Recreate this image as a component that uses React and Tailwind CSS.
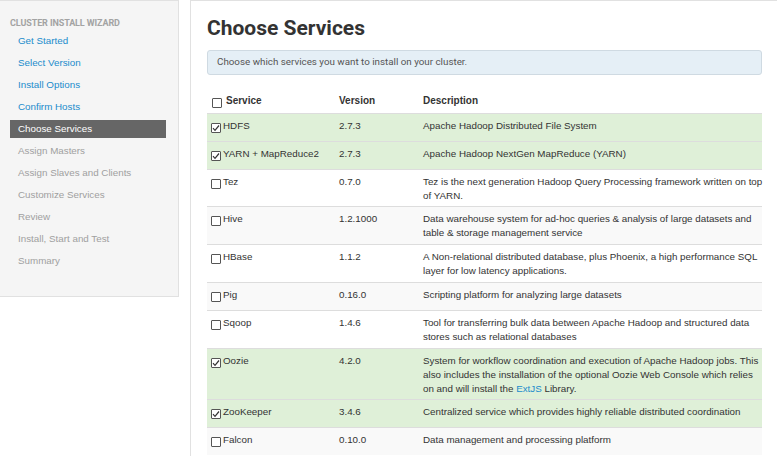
import React from "react";

const Check = ({ checked, className = "" }) => (
  <span className={`inline-flex w-[10px] h-[10px] shrink-0 border border-[#555] rounded-[1px] bg-white items-center justify-center ${className}`}>
    {checked && (
      <svg width="8" height="8" viewBox="0 0 8 8">
        <polyline points="1,4.2 3,6.3 7,1.5" fill="none" stroke="#333" strokeWidth="1.2" />
      </svg>
    )}
  </span>
);

const steps = [
  ["Get Started", "link"],
  ["Select Version", "link"],
  ["Install Options", "link"],
  ["Confirm Hosts", "link"],
  ["Choose Services", "active"],
  ["Assign Masters", "off"],
  ["Assign Slaves and Clients", "off"],
  ["Customize Services", "off"],
  ["Review", "off"],
  ["Install, Start and Test", "off"],
  ["Summary", "off"],
];

const rows = [
  { name: "HDFS", v: "2.7.3", d: ["Apache Hadoop Distributed File System"], c: true },
  { name: "YARN + MapReduce2", v: "2.7.3", d: ["Apache Hadoop NextGen MapReduce (YARN)"], c: true },
  { name: "Tez", v: "0.7.0", d: ["Tez is the next generation Hadoop Query Processing framework written on top", "of YARN."] },
  { name: "Hive", v: "1.2.1000", d: ["Data warehouse system for ad-hoc queries & analysis of large datasets and", "table & storage management service"], tall: true },
  { name: "HBase", v: "1.1.2", d: ["A Non-relational distributed database, plus Phoenix, a high performance SQL", "layer for low latency applications."], tall: true },
  { name: "Pig", v: "0.16.0", d: ["Scripting platform for analyzing large datasets"] },
  { name: "Sqoop", v: "1.4.6", d: ["Tool for transferring bulk data between Apache Hadoop and structured data", "stores such as relational databases"], tall: true },
  {
    name: "Oozie",
    v: "4.2.0",
    d: [
      "System for workflow coordination and execution of Apache Hadoop jobs. This",
      "also includes the installation of the optional Oozie Web Console which relies",
      <>on and will install the <span className="text-[#1b8ccc]">ExtJS</span> Library.</>,
    ],
    c: true,
  },
  { name: "ZooKeeper", v: "3.4.6", d: ["Centralized service which provides highly reliable distributed coordination"], c: true },
  { name: "Falcon", v: "0.10.0", d: ["Data management and processing platform"] },
];

export default function App() {
  return (
    <div className="flex w-[777px] h-[456px] overflow-hidden bg-white font-['Liberation_Sans',Arial,sans-serif] text-[#333]">
      <aside className="w-[179px] h-[297px] shrink-0 border-t border-r border-b border-[#e1e1e1] bg-[#f5f5f5] pl-[10px] pr-[12px] pt-[16px]">
        <div className="h-[12px] leading-[12px] text-[9px] font-bold text-[#a3a3a3] font-['Roboto',sans-serif] tracking-[-0.1px]">CLUSTER INSTALL WIZARD</div>
        <div className="mt-[3px] flex flex-col">
          {steps.map(([label, st]) => (
            <div
              key={label}
              className={`h-[18px] mb-[4px] flex items-center pl-[8px] text-[9.8px] ${
                st === "active" ? "bg-[#666] text-white" : st === "link" ? "text-[#1b8ccc]" : "text-[#a0a0a0]"
              }`}
            >
              {label}
            </div>
          ))}
        </div>
      </aside>
      <div className="w-[11px] shrink-0" />
      <main className="flex-1 h-[470px] border-t border-l border-r border-[#e1e1e1] px-[16px] pt-[15px]">
        <h2 className="h-[25px] leading-[25px] text-[21px] font-bold text-[#333] font-['Roboto',sans-serif]">Choose Services</h2>
        <div className="mt-[9px] h-[25px] flex items-center px-[9px] border border-[#cfdae2] rounded-[3px] bg-[#e5eff6] text-[9.8px] text-[#555] font-['Roboto',sans-serif]">
          Choose which services you want to install on your cluster.
        </div>
        <div className="mt-[14px] text-[9.8px] leading-[14px]">
          <div className="grid grid-cols-[127px_84px_1fr] h-[24px] items-center font-bold text-[10px]">
            <div className="flex items-center pl-[5px]">
              <Check className="mt-[4px]" />
              <span className="ml-[4px]">Service</span>
            </div>
            <div className="pl-[5px]">Version</div>
            <div className="pl-[5px]">Description</div>
          </div>
          {rows.map((r, i) => (
            <div
              key={r.name}
              className={`grid grid-cols-[127px_84px_1fr] min-h-[28px] border-t border-[#ddd] ${
                r.c ? "bg-[#dff0d8]" : i % 2 === 1 ? "bg-[#f9f9f9]" : "bg-white"
              }`}
            >
              <div className="flex items-start pl-[4px] pt-[5px]">
                <Check checked={r.c} className="mt-[4px]" />
                <span className="ml-[2px]">{r.name}</span>
              </div>
              <div className="pl-[5px] pt-[5px]">{r.v}</div>
              <div className={`pl-[5px] pt-[5px] whitespace-nowrap ${r.tall ? "pb-[4px]" : "pb-[3px]"}`}>
                {r.d.map((line, k) => (
                  <div key={k}>{line}</div>
                ))}
              </div>
            </div>
          ))}
        </div>
      </main>
    </div>
  );
}
